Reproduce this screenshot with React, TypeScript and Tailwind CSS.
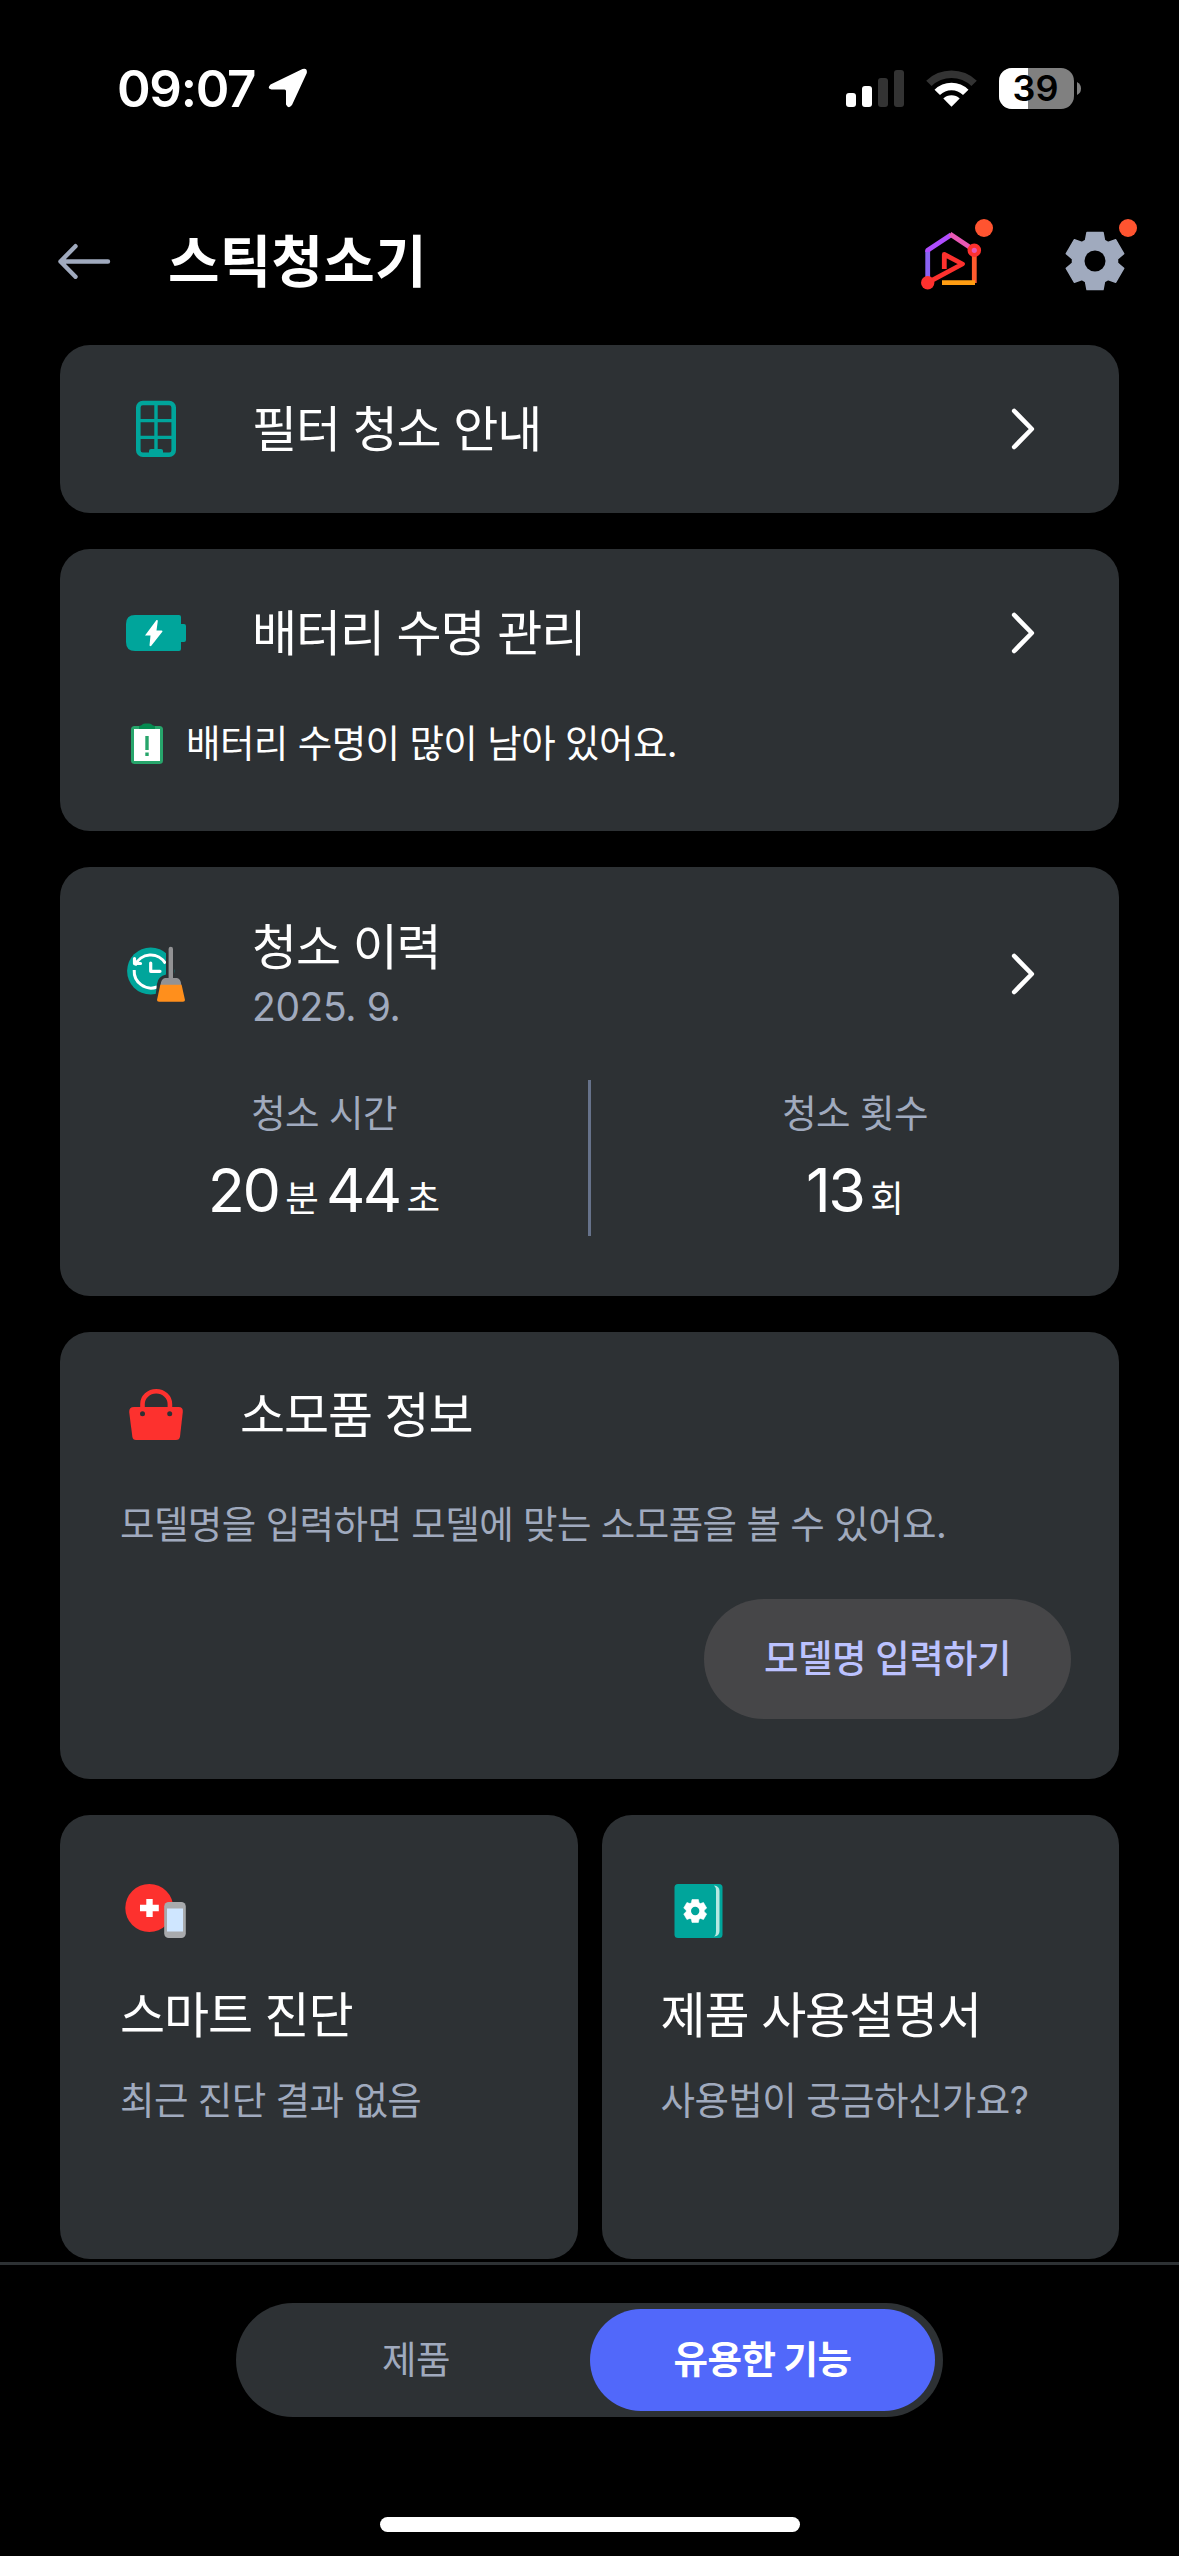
import type { ReactNode } from "react";

// Outline of a six tooth gear centred on 0,0 with an outer radius of 29
const gearPoints = [0, 60, 120, 180, 240, 300]
    .flatMap((deg) => {
        const a = (deg * Math.PI) / 180;
        return [[-9.5, -20.5], [-8, -28.5], [8, -28.5], [9.5, -20.5]].map(
            ([x, y]) => `${(x * Math.cos(a) - y * Math.sin(a)).toFixed(2)},${(x * Math.sin(a) + y * Math.cos(a)).toFixed(2)}`
        );
    })
    .join(" ");

const Gear = ({ color, hole }: { color: string; hole: string }) => (
    <>
        <polygon points={gearPoints} fill={color} stroke={color} strokeWidth="1.5" strokeLinejoin="round" />
        <circle r="10.5" fill={hole} />
    </>
);

const StatusBar = () => (
    <div className="h-44 shrink-0 flex items-center pl-[117px] pr-[98px]">
        <span className="text-[51px] leading-none font-semibold tracking-[-1.3px] w-[151px] whitespace-nowrap">09:07</span>
        <svg className="w-[40px] h-[40px]" viewBox="0 0 40 40" fill="#fff">
            <path d="M2.5 16.5 L34.5 1 Q39.5 -0.5 38.8 5 L24 37 Q20.5 41.5 18 36.5 L18 23 Q18 21.5 16.5 21.5 L3.5 21.5 Q-1.5 20.5 2.5 16.5 Z" />
        </svg>
        <div className="ml-auto flex items-center">
            <svg className="w-[58px] h-[38px]" viewBox="0 0 58 38">
                <rect x="0" y="24" width="10" height="14" rx="3" fill="#fff" />
                <rect x="16" y="17" width="10" height="21" rx="3" fill="#fff" />
                <rect x="32" y="9" width="10" height="29" rx="3" fill="#333" />
                <rect x="48" y="1" width="10" height="37" rx="3" fill="#333" />
            </svg>
            <svg className="w-[51px] h-[38px] ml-[22px]" viewBox="0 0 51 38">
                <path d="M0.2 11.8 A36 36 0 0 1 50.8 11.8 L45.4 17 A28.5 28.5 0 0 0 5.6 17 Z" fill="#333" />
                <path d="M8.5 20.7 A24 24 0 0 1 42.5 20.7 L37 26 A16.5 16.5 0 0 0 14 26 Z" fill="#fff" />
                <path d="M17.3 29.6 A11.8 11.8 0 0 1 33.7 29.6 L25.5 37.8 Z" fill="#fff" />
            </svg>
            <div className="relative ml-[22px] w-[75px] h-[41px] rounded-[13px] overflow-hidden bg-[#808080]">
                <div className="w-[29px] h-full bg-white" />
                <span className="absolute inset-0 pr-[2px] flex items-center justify-center text-[36px] leading-none font-semibold text-black">39</span>
            </div>
            <svg className="w-[4px] h-[13px] ml-[3px]" viewBox="0 0 4 13">
                <path d="M0 0 Q4 2 4 6.5 Q4 11 0 13 Z" fill="#808080" />
            </svg>
        </div>
    </div>
);

const Header = () => (
    <header className="h-[169px] shrink-0 flex items-center pl-[57px] pr-[41px]">
        <svg className="w-[54px] h-[36px]" viewBox="0 0 54 36" fill="none" stroke="#a0aabe" strokeWidth="4.4" strokeLinecap="round" strokeLinejoin="round">
            <path d="M51 18.5 H3.5 M18.5 3.2 L3.5 18.5 L18.5 33.8" />
        </svg>
        <h1 className="ml-[57px] mt-[2px] text-[56px] leading-none font-bold tracking-[0.2px]">스틱청소기</h1>
        <svg className="ml-auto w-[74px] h-[85px]" viewBox="920 218 74 85" fill="none" strokeWidth="4.8">
            <path d="M927.7 283 V250.3" stroke="#8a62f2" />
            <path d="M927.7 252 V250.3 L951.2 234.8" stroke="#b04dff" strokeLinejoin="round" />
            <path d="M950 234 L974.3 250.3" stroke="#e858b4" />
            <path d="M974.3 250.3 V283" stroke="#ff5a2d" />
            <path d="M942 282.7 H975" stroke="#ff9d12" strokeLinecap="butt" />
            <path d="M944.3 269 V254.4 L962.5 264 L927.7 282.7" stroke="#fd312e" strokeLinejoin="round" />
            <circle cx="927.7" cy="282.7" r="6.7" fill="#fd312e" />
            <circle cx="974.3" cy="250.3" r="4.7" fill="#e858b4" stroke="#fd312e" strokeWidth="4.2" />
            <circle cx="984" cy="228" r="9" fill="#ff5430" />
        </svg>
        <svg className="ml-[70px] w-[74px] h-[85px]" viewBox="1064 218 74 85">
            <g transform="translate(1095 261)">
                <Gear color="#a0aabe" hole="#000" />
            </g>
            <circle cx="1128" cy="228" r="9" fill="#ff5430" />
        </svg>
    </header>
);

const Chevron = () => (
    <svg className="ml-auto mr-[84px] w-[24px] h-[42px]" viewBox="0 0 24 42" fill="none" stroke="#fff" strokeWidth="4.6" strokeLinecap="round" strokeLinejoin="round">
        <path d="M3.2 3 L20.8 21 L3.2 39" />
    </svg>
);

const FilterIcon = () => (
    <svg className="w-[60px] h-[60px]" viewBox="0 0 60 60" fill="none" stroke="#00a59b">
        <rect x="12.3" y="4" width="35.4" height="51.8" rx="4.5" strokeWidth="4.6" />
        <path d="M30 4 V54 M12 21.6 H48 M12 38.4 H48" strokeWidth="3.4" />
        <path d="M23 55 V52 Q23 50 25 50 H35 Q37 50 37 52 V55 Z" fill="#00a59b" stroke="none" />
    </svg>
);

const BatteryIcon = () => (
    <svg className="w-[60px] h-[60px]" viewBox="0 0 60 60" fill="#00a59b">
        <path d="M9 12 H53 Q55 12 55 14 V21 H58 Q60 21 60 23 V37 Q60 39 58 39 H55 V46 Q55 48 53 48 H9 Q0 48 0 39 V21 Q0 12 9 12 Z" />
        <path d="M30.5 17 L19 32.5 H24.5 L23.5 42.5 Q24.5 44 25.5 42.5 L36.5 28.5 Q36.5 27.5 35.5 27.5 H30.5 L31.8 18 Q31.8 16.5 30.5 17 Z" fill="#fff" />
    </svg>
);

const ClipboardIcon = () => (
    <svg className="w-[32px] h-[42px]" viewBox="0 0 32 42">
        <rect y="3" width="32" height="38" rx="3.5" fill="#27a56b" />
        <rect x="3" y="6" width="26" height="32" fill="#fff" />
        <path d="M8 6 V3.5 Q8 2.5 10 2.5 L12 1 Q12.5 0.5 14 0.5 H18 Q19.5 0.5 20 1 L22 2.5 Q24 2.5 24 3.5 V6 Z" fill="#058a50" />
        <path d="M16 13 V27 M16 29.5 V33" stroke="#27a56b" strokeWidth="3.4" />
    </svg>
);

const HistoryIcon = () => (
    <svg className="w-[60px] h-[60px]" viewBox="126 944 60 60">
        <circle cx="150.7" cy="971" r="23.6" fill="#00a59b" />
        <path d="M135 965.5 A17 17 0 0 1 165.5 963.5 M134.2 970 A17 17 0 0 0 157 987" fill="none" stroke="#fff" strokeWidth="3" />
        <path d="M134.5 958.5 V963.5 H140.5" fill="none" stroke="#fff" strokeWidth="3.2" strokeLinejoin="round" strokeLinecap="round" />
        <path d="M150.7 963 V971.3 H160" fill="none" stroke="#fff" strokeWidth="3.2" strokeLinejoin="round" strokeLinecap="round" />
        <path d="M166 944 H174 V974 L181 978 L186 1004 H154.5 L157 984 Q158 976 166 974.5 Z" fill="#2d3134" />
        <path d="M168.6 979 V949 Q168.6 946.7 170.8 946.7 Q173 946.7 173 949 V978 H177 Q181 979 181.3 985 H160.5 Q161 979 165 978 H168.6 Z" fill="#929294" />
        <path d="M160.3 984.8 H181.6 L185 1000 Q185 1001.7 183 1001.7 H159 Q157 1001.7 157 1000 Z" fill="#ff8f1c" />
    </svg>
);

const BagIcon = () => (
    <svg className="w-[60px] h-[60px]" viewBox="126 1385 60 60">
        <path d="M142.5 1410 V1404 A13.7 12.8 0 0 1 169.9 1404 V1410" fill="none" stroke="#fd312e" strokeWidth="4.6" />
        <path d="M134 1407 H178.5 Q183.3 1407 182.8 1412 L180 1436.5 Q179.5 1440 176 1440 H136 Q132.8 1440 132.3 1436.5 L129.2 1412 Q129 1407 134 1407 Z" fill="#fd312e" />
        <circle cx="142.5" cy="1413.8" r="2.5" fill="#2d3134" />
        <circle cx="169.7" cy="1413.8" r="2.5" fill="#2d3134" />
    </svg>
);

const DiagnosisIcon = () => (
    <svg className="w-[66px] h-[54px]" viewBox="120 1884 66 54">
        <circle cx="149.3" cy="1908" r="24" fill="#fd312e" />
        <path d="M149.5 1899 V1917 M140 1908 H158.8" stroke="#fff" strokeWidth="6.4" />
        <rect x="164.2" y="1902" width="21.6" height="36" rx="4.5" fill="#a8aaad" />
        <rect x="167" y="1908.5" width="16" height="23" fill="#cfe6ff" />
    </svg>
);

const ManualIcon = () => (
    <svg className="w-[66px] h-[54px]" viewBox="661.5 1884 66 54">
        <rect x="674" y="1884" width="48" height="54" rx="3.5" fill="#00a59b" />
        <path d="M713.5 1885.5 Q719 1886 719 1891 V1931 Q719 1936 713.5 1936.5 Q715.5 1935.5 715.5 1931 V1891 Q715.5 1887 713.5 1885.5 Z" fill="#b6e8e2" />
        <g transform="translate(694.7 1911) scale(0.4)">
            <Gear color="#fff" hole="#00a59b" />
        </g>
    </svg>
);

const Card = ({ className, children }: { className: string; children: ReactNode }) => (
    <section className={`bg-[#2d3134] rounded-[30px] ${className}`}>{children}</section>
);

const title = "text-[49px] tracking-[-1.1px] leading-[60px] whitespace-nowrap";
const body = "text-[37.5px] tracking-[-0.58px] whitespace-nowrap";

const stats = [
    { label: "청소 시간", parts: [["20", "분"], ["44", "초"]] },
    { label: "청소 횟수", parts: [["13", "회"]] }
];

export default function App() {
    return (
        <div className="w-[1179px] h-[2556px] bg-black text-white flex flex-col overflow-hidden font-[Inter,'Noto_Sans_CJK_KR',sans-serif]">
            <StatusBar />
            <Header />

            <main className="px-[60px] flex flex-col gap-9">
                <Card className="h-[168px] flex items-center pl-[66px]">
                    <FilterIcon />
                    <h2 className={`ml-[66px] mt-[2px] ${title}`}>필터 청소 안내</h2>
                    <Chevron />
                </Card>

                <Card className="h-[282px]">
                    <div className="h-[168px] flex items-center pl-[66px]">
                        <BatteryIcon />
                        <h2 className={`ml-[66px] mt-[2px] ${title}`}>배터리 수명 관리</h2>
                        <Chevron />
                    </div>
                    <div className="h-[54px] flex items-center pl-[71px]">
                        <ClipboardIcon />
                        <p className={`ml-[23px] ${body}`}>배터리 수명이 많이 남아 있어요.</p>
                    </div>
                </Card>

                <Card className="h-[429px]">
                    <div className="h-[213px] flex items-center pl-[66px]">
                        <HistoryIcon />
                        <div className="ml-[66px] mt-[4px] flex flex-col">
                            <h2 className={title}>청소 이력</h2>
                            <p className="mt-[2px] text-[39px] leading-[54px] tracking-[-0.4px] text-[#a0aabe]">2025. 9.</p>
                        </div>
                        <Chevron />
                    </div>
                    <div className="h-[156px] flex">
                        {stats.map((stat, i) => (
                            <div key={stat.label} className="contents">
                                {i > 0 && <div className="w-[3px] bg-[#66728a]" />}
                                <div className="flex-1 flex flex-col items-center pt-[7px]">
                                    <p className={`leading-[54px] text-[#a0aabe] ${body}`}>{stat.label}</p>
                                    <p className="mt-[13px] flex items-baseline gap-[7px] leading-[72px]">
                                        {stat.parts.map(([value, unit]) => (
                                            <span key={unit} className="flex items-baseline gap-[7px]">
                                                <span className="text-[61px] tracking-[-2.6px]">{value}</span>
                                                <span className="text-[36.5px]">{unit}</span>
                                            </span>
                                        ))}
                                    </p>
                                </div>
                            </div>
                        ))}
                    </div>
                </Card>

                <Card className="h-[447px] flex flex-col">
                    <div className="h-[166px] flex items-center pl-[66px]">
                        <BagIcon />
                        <h2 className={`ml-[54px] mt-[2px] ${title}`}>소모품 정보</h2>
                    </div>
                    <p className={`pl-[60px] leading-[54px] text-[#a0aabe] ${body}`}>모델명을 입력하면 모델에 맞는 소모품을 볼 수 있어요.</p>
                    <button className={`mt-[47px] mr-[48px] self-end w-[367px] h-[120px] rounded-full bg-[#464648] text-[#bcc2ff] font-medium ${body}`}>
                        모델명 입력하기
                    </button>
                </Card>

                <div className="grid grid-cols-2 gap-6">
                    <Card className="h-[444px] pt-[69px] pl-[60px]">
                        <DiagnosisIcon />
                        <h2 className={`mt-[48px] ${title}`}>스마트 진단</h2>
                        <p className={`mt-7 leading-[54px] text-[#a0aabe] ${body}`}>최근 진단 결과 없음</p>
                    </Card>
                    <Card className="h-[444px] pt-[69px] pl-[60px]">
                        <ManualIcon />
                        <h2 className={`mt-[48px] -ml-px ${title}`}>제품 사용설명서</h2>
                        <p className={`mt-7 -ml-px leading-[54px] text-[#a0aabe] ${body}`}>사용법이 궁금하신가요?</p>
                    </Card>
                </div>
            </main>

            <footer className="mt-[3px] flex-1 border-t-[3px] border-[#2d3134] flex flex-col items-center pt-[38px]">
                <div className="w-[707px] h-[114px] rounded-full bg-[#2d3134] flex items-center pl-[6px] pr-2">
                    <button className={`flex-1 text-[#a0aabe] ${body}`}>제품</button>
                    <button className={`w-[345px] h-[102px] rounded-full bg-[#5168fa] font-bold ${body}`}>유용한 기능</button>
                </div>
                <div className="mt-[100px] w-[420px] h-[15px] rounded-full bg-white" />
            </footer>
        </div>
    );
}
